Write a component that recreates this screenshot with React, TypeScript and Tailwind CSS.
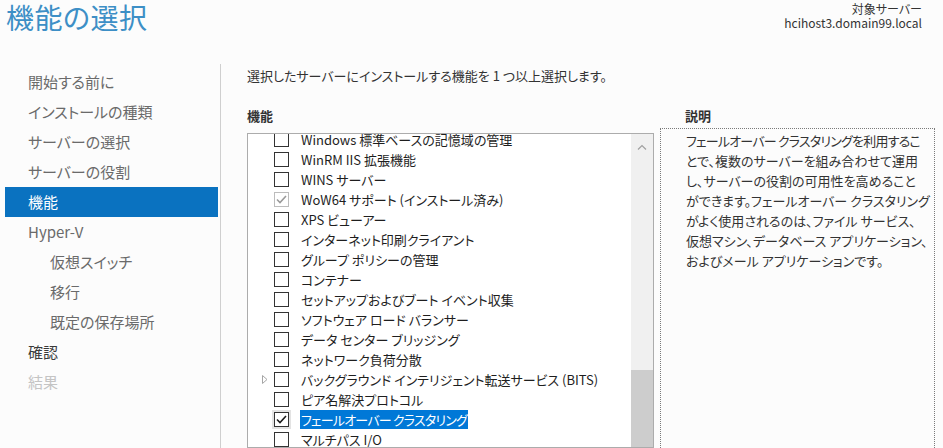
import React from "react";

const font = { fontFamily: '"Noto Sans CJK JP", "Noto Sans", sans-serif' };

type Row = { label: string; state?: "none" | "disabled" | "checked"; expander?: boolean; selected?: boolean };

const rows: Row[] = [
  { label: "Windows 標準ベースの記憶域の管理" },
  { label: "WinRM IIS 拡張機能" },
  { label: "WINS サーバー" },
  { label: "WoW64 サポート (インストール済み)", state: "disabled" },
  { label: "XPS ビューアー" },
  { label: "インターネット印刷クライアント" },
  { label: "グループ ポリシーの管理" },
  { label: "コンテナー" },
  { label: "セットアップおよびブート イベント収集" },
  { label: "ソフトウェア ロード バランサー" },
  { label: "データ センター ブリッジング" },
  { label: "ネットワーク負荷分散" },
  { label: "バックグラウンド インテリジェント転送サービス (BITS)", expander: true },
  { label: "ピア名解決プロトコル" },
  { label: "フェールオーバー クラスタリング", state: "checked", selected: true },
  { label: "マルチパス I/O" },
  { label: "メディア ファンデーション" },
];

const nav: { label: string; indent?: boolean; selected?: boolean; tone?: string }[] = [
  { label: "開始する前に" },
  { label: "インストールの種類" },
  { label: "サーバーの選択" },
  { label: "サーバーの役割" },
  { label: "機能", selected: true },
  { label: "Hyper-V" },
  { label: "仮想スイッチ", indent: true },
  { label: "移行", indent: true },
  { label: "既定の保存場所", indent: true },
  { label: "確認", tone: "text-[#3a3a3a]" },
  { label: "結果", tone: "text-[#c4c4c4]" },
];

function Check({ color }: { color: string }) {
  return (
    <svg width="11" height="9" viewBox="0 0 11 9" fill="none">
      <path d="M1 4.5 L4 7.5 L10 1" stroke={color} strokeWidth="1.6" />
    </svg>
  );
}

function CheckBox({ state }: { state?: Row["state"] }) {
  if (state === "checked") {
    return (
      <div className="w-[19px] h-[19px] -ml-[2px] flex items-center justify-center bg-[#e3e3e3]">
        <div className="w-[15px] h-[15px] border border-[#333333] bg-white flex items-center justify-center">
          <Check color="#1a1a1a" />
        </div>
      </div>
    );
  }
  if (state === "disabled") {
    return (
      <div className="w-[15px] h-[15px] border border-[#bcbcbc] bg-white flex items-center justify-center">
        <Check color="#9a9a9a" />
      </div>
    );
  }
  return <div className="w-[15px] h-[15px] border border-[#333333] bg-white" />;
}

export default function App() {
  return (
    <div
      className="w-[943px] h-[448px] overflow-hidden bg-[#fcfcfc] flex flex-col [font-feature-settings:'palt']"
      style={font}
    >
      {/* header */}
      <div className="h-[64px] flex justify-between shrink-0">
        <div className="pl-[6px] text-[28px] leading-[34px] text-[#3d8fc6] tracking-[0.5px]">機能の選択</div>
        <div className="pr-[21px] pt-[2px] text-right text-[12px] leading-[14px] text-[#333333]">
          <div>対象サーバー</div>
          <div className="[font-feature-settings:normal]">hcihost3.domain99.local</div>
        </div>
      </div>

      <div className="flex flex-1 min-h-0">
        {/* nav */}
        <div className="w-[221px] shrink-0 border-r border-[#cfcfcf] pt-[3px] pr-[2px]">
          {nav.map((n) =>
            n.selected ? (
              <div
                key={n.label}
                className="h-[30px] ml-[5px] bg-[#0a72c0] text-white flex items-center pl-[23px] text-[15px]"
              >
                {n.label}
              </div>
            ) : (
              <div
                key={n.label}
                className={`h-[30px] flex items-center text-[15px] ${n.tone ?? "text-[#6a6a6a]"} ${
                  n.indent ? "pl-[50px]" : "pl-[28px]"
                }`}
              >
                {n.label}
              </div>
            )
          )}
        </div>

        {/* main */}
        <div className="flex-1 pl-[26px] flex flex-col min-h-0">
          <div className="h-[22px] mt-[1px] text-[13px] leading-[22px] text-[#333333]">
            選択したサーバーにインストールする機能を 1 つ以上選択します。
          </div>
          <div className="flex mt-[18px]">
            <div className="w-[407px] text-[13px] leading-[22px] font-bold text-[#333333]">機能</div>
            <div className="pl-[31px] text-[13px] leading-[22px] font-bold text-[#333333]">説明</div>
          </div>
          <div className="flex flex-1 min-h-0 mt-[6px]">
            {/* list */}
            <div className="w-[407px] border border-[#acacac] bg-white flex overflow-hidden">
              <div className="flex-1 overflow-hidden">
                <div className="-mt-[5px]">
                  {rows.map((r) => (
                    <div key={r.label} className="h-[20px] flex items-center">
                      <div className="w-[26px] flex justify-end pr-[6px]">
                        {r.expander && (
                          <svg width="6" height="9" viewBox="0 0 6 9">
                            <path d="M0.5 0.5 L5 4.5 L0.5 8.5 Z" fill="none" stroke="#a6a6a6" strokeWidth="1" />
                          </svg>
                        )}
                      </div>
                      <div className="w-[26px] flex items-center">
                        <CheckBox state={r.state} />
                      </div>
                      <div
                        className={`text-[13px] leading-[19px] whitespace-nowrap px-[1px] ${
                          r.selected ? "bg-[#0078d7] text-white tracking-[-0.8px]" : "text-[#1e1e1e]"
                        }`}
                      >
                        {r.label}
                      </div>
                    </div>
                  ))}
                </div>
              </div>
              <div className="w-[22px] bg-[#f0f0f0] flex flex-col">
                <div className="h-[26px] flex items-center justify-center">
                  <svg width="10" height="6" viewBox="0 0 10 6">
                    <path d="M1 5.5 L5 1.5 L9 5.5" fill="none" stroke="#a0a0a0" strokeWidth="1.2" />
                  </svg>
                </div>
                <div className="h-[210px]" />
                <div className="flex-1 bg-[#cdcdcd]" />
              </div>
            </div>
            {/* description */}
            <div className="ml-[6px] w-[275px] -mt-[5px] border border-dotted border-[#7a7a7a] border-b-0 pl-[25px] pt-[2px] pr-[4px]">
              <div className="text-[13px] leading-[20px] text-[#333333] whitespace-nowrap">
                <div className="tracking-[-0.8px]">フェールオーバー クラスタリングを利用するこ</div>
                <div>とで、複数のサーバーを組み合わせて運用</div>
                <div>し、サーバーの役割の可用性を高めること</div>
                <div>ができます。フェールオーバー クラスタリング</div>
                <div>がよく使用されるのは、ファイル サービス、</div>
                <div>仮想マシン、データベース アプリケーション、</div>
                <div>およびメール アプリケーションです。</div>
              </div>
            </div>
          </div>
        </div>
      </div>
    </div>
  );
}
